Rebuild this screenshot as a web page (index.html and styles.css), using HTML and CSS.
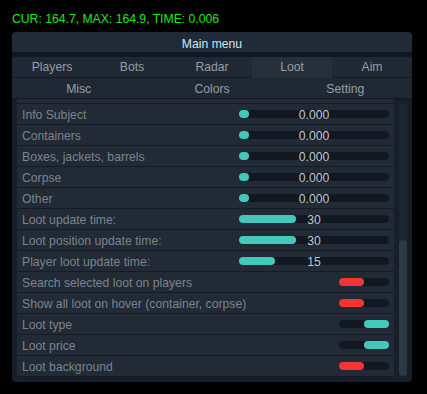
FILE: index.html
```html
<!DOCTYPE html>
<html lang="en">
<head>
    <meta charset="UTF-8">
    <title>Main menu</title>
    <link rel="stylesheet" href="styles.css">
</head>
<body>
<div class="stats">CUR: 164.7, MAX: 164.9, TIME: 0.006</div>

<div class="panel">
    <div class="title">Main menu</div>
    <div class="strip"></div>

    <div class="tabs tabs-5">
        <div class="tab">Players</div>
        <div class="tab">Bots</div>
        <div class="tab">Radar</div>
        <div class="tab active">Loot</div>
        <div class="tab">Aim</div>
    </div>
    <div class="tabs tabs-3">
        <div class="tab">Misc</div>
        <div class="tab">Colors</div>
        <div class="tab">Setting</div>
    </div>

    <div class="body">
        <div class="list">
            <div class="row partial"></div>

            <div class="row">
                <span class="label">Info Subject</span>
                <div class="slider"><div class="fill" style="width: 10px"></div><span class="value">0.000</span></div>
            </div>
            <div class="row">
                <span class="label">Containers</span>
                <div class="slider"><div class="fill" style="width: 10px"></div><span class="value">0.000</span></div>
            </div>
            <div class="row">
                <span class="label">Boxes, jackets, barrels</span>
                <div class="slider"><div class="fill" style="width: 10px"></div><span class="value">0.000</span></div>
            </div>
            <div class="row">
                <span class="label">Corpse</span>
                <div class="slider"><div class="fill" style="width: 10px"></div><span class="value">0.000</span></div>
            </div>
            <div class="row">
                <span class="label">Other</span>
                <div class="slider"><div class="fill" style="width: 10px"></div><span class="value">0.000</span></div>
            </div>
            <div class="row">
                <span class="label">Loot update time:</span>
                <div class="slider"><div class="fill" style="width: 57px"></div><span class="value">30</span></div>
            </div>
            <div class="row">
                <span class="label">Loot position update time:</span>
                <div class="slider"><div class="fill" style="width: 57px"></div><span class="value">30</span></div>
            </div>
            <div class="row">
                <span class="label">Player loot update time:</span>
                <div class="slider"><div class="fill" style="width: 36px"></div><span class="value">15</span></div>
            </div>
            <div class="row">
                <span class="label">Search selected loot on players</span>
                <div class="toggle off"><div class="knob"></div></div>
            </div>
            <div class="row">
                <span class="label">Show all loot on hover (container, corpse)</span>
                <div class="toggle off"><div class="knob"></div></div>
            </div>
            <div class="row">
                <span class="label">Loot type</span>
                <div class="toggle on"><div class="knob"></div></div>
            </div>
            <div class="row">
                <span class="label">Loot price</span>
                <div class="toggle on"><div class="knob"></div></div>
            </div>
            <div class="row">
                <span class="label">Loot background</span>
                <div class="toggle off"><div class="knob"></div></div>
            </div>
        </div>

        <div class="scrollbar">
            <div class="thumb"></div>
        </div>
    </div>
</div>
</body>
</html>
```

FILE: styles.css
```css
body {
    margin: 0;
    background-color: #000;
    font-family: "Liberation Sans", Arial, sans-serif;
    font-size: 12.2px;
}
.stats {
    padding: 12px 12px 0;
    line-height: 14px;
    color: #1ee81e;
}
.panel {
    width: 400px;
    margin: 6px 0 0 12px;
    background-color: #17202a;
    border-radius: 4px;
    overflow: hidden;
}
.title {
    height: 18px;
    padding-top: 2px;
    line-height: 20px;
    text-align: center;
    background-color: #212b37;
    color: #c3e8ee;
}
.strip {
    height: 5px;
    background-color: #111820;
}
.tabs {
    display: grid;
    height: 20px;
    border-bottom: 1px solid #121920;
    background-color: #1f2833;
}
.tabs-5 { grid-template-columns: repeat(5, 1fr); }
.tabs-3 { grid-template-columns: repeat(3, 1fr); }
.tab {
    line-height: 21px;
    text-align: center;
    color: #969ea6;
}
.tabs-3 .tab {
    line-height: 22px;
}
.tab.active {
    background-color: #26303b;
}
.body {
    display: flex;
    height: 283px;
    padding-left: 5px;
}
.list {
    width: 377px;
    display: flex;
    flex-direction: column;
}
.row {
    display: flex;
    align-items: center;
    height: 20px;
    flex-shrink: 0;
    border-bottom: 1px solid #151c25;
    background-color: #212a35;
    padding: 0 5px;
}
.row.partial {
    height: 4px;
}
.label {
    flex: 1;
    color: #7b848d;
    line-height: 20px;
    padding-top: 2px;
    white-space: nowrap;
}
.slider {
    position: relative;
    width: 150px;
    height: 8px;
    border-radius: 4px;
    background-color: #111822;
}
.fill {
    height: 8px;
    border-radius: 4px;
    background-color: #44c8ba;
}
.value {
    position: absolute;
    left: 0;
    right: 0;
    top: -3px;
    line-height: 16px;
    text-align: center;
    color: #c4c8cc;
}
.toggle {
    display: flex;
    width: 50px;
    height: 8px;
    border-radius: 4px;
    background-color: #111822;
}
.knob {
    width: 25px;
    height: 8px;
    border-radius: 4px;
}
.toggle.off .knob {
    background-color: #f53535;
}
.toggle.on {
    justify-content: flex-end;
}
.toggle.on .knob {
    background-color: #44c8ba;
}
.scrollbar {
    display: flex;
    flex-direction: column;
    justify-content: flex-end;
    width: 8px;
    height: 273px;
    margin: 4px 0 0 5px;
    border-radius: 4px;
    background-color: #1c2530;
}
.thumb {
    height: 136px;
    border-radius: 4px;
    background-color: #2e3946;
}
```
